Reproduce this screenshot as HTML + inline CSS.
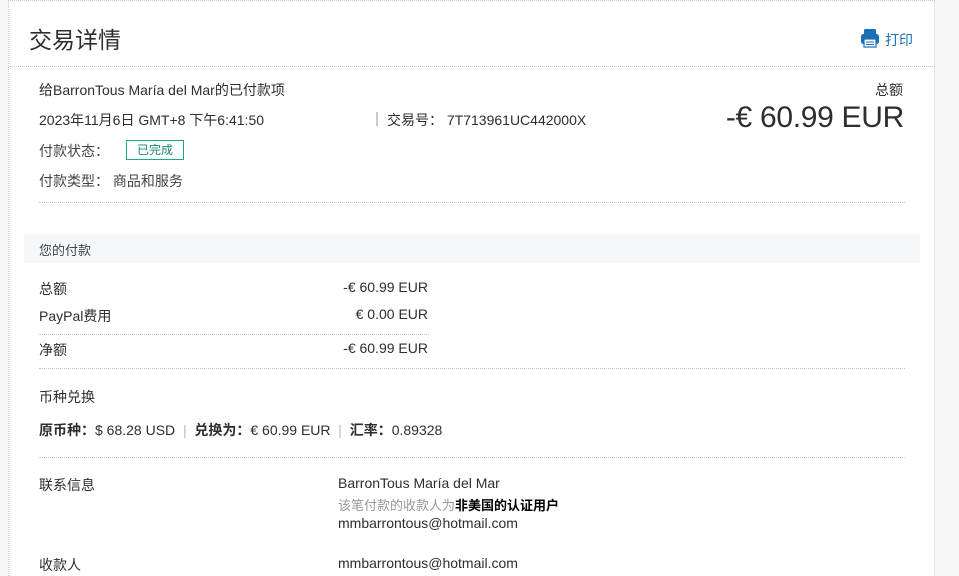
<!DOCTYPE html>
<html><head><meta charset="utf-8"><style>
*{margin:0;padding:0;box-sizing:border-box}
body{width:959px;height:576px;overflow:hidden;background:#f5f5f5;font-family:"Liberation Sans","Noto Sans CJK SC",sans-serif;color:#2c2e2f;position:relative}
.card{position:absolute;left:8px;top:0;width:927px;height:576px;background:#fff;border-left:1px dotted #ccc;border-top:1px dotted #ccc;border-right:1px solid #e6e6e6}
.a{position:absolute;white-space:nowrap}
.dl{position:absolute;border-top:1px dotted #c8c8c8}
.t14{font-size:14px}
</style></head><body>
<div class="card"></div>
<div class="a" style="left:29px;top:21px;font-size:23px;color:#2c2e2f">交易详情</div>
<svg class="a" style="left:860px;top:28px" width="20" height="20" viewBox="0 0 20 20"><rect x="4" y="1" width="12" height="6" rx="1.5" fill="#1a6fb5"/><rect x="1" y="6" width="18" height="10" rx="2.5" fill="#1a6fb5"/><rect x="4" y="11" width="12" height="8" fill="#fff" stroke="#1a6fb5" stroke-width="1.2"/><line x1="6" y1="14" x2="14" y2="14" stroke="#1a6fb5"/><line x1="6" y1="16.5" x2="14" y2="16.5" stroke="#1a6fb5"/></svg>
<div class="a" style="left:885px;top:30px;font-size:14px;color:#1a6fb5">打印</div>
<div class="dl" style="left:9px;top:66px;width:926px"></div>
<div class="a t14" style="left:39px;top:80px">给BarronTous María del Mar的已付款项</div>
<div class="a" style="left:875px;top:80px;font-size:14px">总额</div>
<div class="a t14" style="left:39px;top:110px">2023年11月6日 GMT+8 下午6:41:50</div>
<div class="a" style="left:376px;top:112px;width:2px;height:14px;background:#ccc"></div>
<div class="a t14" style="left:387px;top:110px">交易号： 7T713961UC442000X</div>
<div class="a" style="right:55px;top:101px;font-size:30px;letter-spacing:-0.3px">-€ 60.99 EUR</div>
<div class="a t14" style="left:39px;top:141px;color:#444">付款状态：</div>
<div class="a" style="left:126px;top:140px;width:58px;height:20px;border:1px solid #1aa88c;font-size:12px;color:#1a8a70;text-align:center;line-height:18px">已完成</div>
<div class="a t14" style="left:39px;top:171px;color:#444">付款类型： 商品和服务</div>
<div class="dl" style="left:39px;top:202px;width:866px"></div>
<div class="a" style="left:24px;top:234px;width:896px;height:29px;background:#f5f7fa"></div>
<div class="a" style="left:39px;top:240px;font-size:13px;color:#444">您的付款</div>
<div class="a t14" style="left:39px;top:279px">总额</div>
<div class="a t14" style="left:39px;top:306px">PayPal费用</div>
<div class="a t14" style="right:531px;top:279px">-€ 60.99 EUR</div>
<div class="a t14" style="right:531px;top:306px">€ 0.00 EUR</div>
<div class="dl" style="left:39px;top:334px;width:390px"></div>
<div class="a t14" style="left:39px;top:340px">净额</div>
<div class="a t14" style="right:531px;top:340px">-€ 60.99 EUR</div>
<div class="dl" style="left:39px;top:368px;width:866px"></div>
<div class="a t14" style="left:39px;top:387px">币种兑换</div>
<div class="a t14" style="left:39px;top:420px"><b>原币种：</b>$ 68.28 USD &nbsp;<span style="color:#bbb">|</span>&nbsp; <b>兑换为：</b>€ 60.99 EUR &nbsp;<span style="color:#bbb">|</span>&nbsp; <b>汇率：</b>0.89328</div>
<div class="dl" style="left:39px;top:457px;width:866px"></div>
<div class="a t14" style="left:39px;top:475px">联系信息</div>
<div class="a t14" style="left:338px;top:475px">BarronTous María del Mar</div>
<div class="a" style="left:338px;top:495px;font-size:13px;color:#999">该笔付款的收款人为<b style="color:#000">非美国的认证用户</b></div>
<div class="a t14" style="left:338px;top:515px">mmbarrontous@hotmail.com</div>
<div class="a t14" style="left:39px;top:555px">收款人</div>
<div class="a t14" style="left:338px;top:555px">mmbarrontous@hotmail.com</div>
</body></html>
